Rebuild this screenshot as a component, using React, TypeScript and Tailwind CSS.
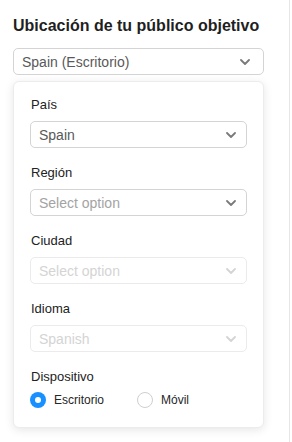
import React from "react";

type Field = {
  label: string;
  value: string;
  placeholder?: boolean;
  disabled?: boolean;
};

const FIELDS: Field[] = [
  { label: "País", value: "Spain" },
  { label: "Región", value: "Select option", placeholder: true },
  { label: "Ciudad", value: "Select option", disabled: true },
  { label: "Idioma", value: "Spanish", disabled: true },
];

function Chevron({ muted }: { muted?: boolean }) {
  return (
    <svg width="10" height="6" viewBox="0 0 10 6" fill="none" className="shrink-0">
      <path
        d="M1 1l4 4 4-4"
        stroke={muted ? "#d4d4d4" : "#7a7a7a"}
        strokeWidth="1.8"
        strokeLinecap="round"
        strokeLinejoin="round"
      />
    </svg>
  );
}

function SelectBox({ field }: { field: Field }) {
  const textColor = field.disabled
    ? "text-[#d4d4d4]"
    : field.placeholder
      ? "text-[#a3a3a3]"
      : "text-[#595959]";
  return (
    <div
      className={`flex h-[27px] items-center justify-between rounded-[5px] border bg-white pl-[8px] pr-[10px] ${
        field.disabled ? "border-[#ebebeb]" : "border-[#d4d4d4]"
      }`}
    >
      <span className={`text-[14px] leading-[20px] ${textColor}`}>{field.value}</span>
      <Chevron muted={field.disabled} />
    </div>
  );
}

function Radio({ label, checked }: { label: string; checked?: boolean }) {
  return (
    <label className="flex items-center gap-[8px]">
      {checked ? (
        <span className="flex h-[16px] w-[16px] items-center justify-center rounded-full bg-[#1890ff]">
          <span className="h-[6px] w-[6px] rounded-full bg-white" />
        </span>
      ) : (
        <span className="h-[16px] w-[16px] rounded-full border border-[#cfcfcf] bg-white" />
      )}
      <span className="text-[12px] leading-[20px] text-[#262626]">{label}</span>
    </label>
  );
}

export default function App() {
  return (
    <div
      className="h-[442px] w-[292px] bg-white"
      style={{ fontFamily: '"Liberation Sans", Arial, sans-serif' }}
    >
      <div className="h-full w-[290px] border-r border-[#e6e6e6] pl-[13px] pr-[25px] pt-[15px]">
        <h2 className="text-[16px] font-bold leading-[22px] text-[#1f1f1f]">
          Ubicación de tu público objetivo
        </h2>

        <div className="mt-[11px] flex h-[27px] items-center justify-between rounded-[5px] border border-[#d4d4d4] pl-[8px] pr-[13px]">
          <span className="text-[14px] leading-[20px] text-[#595959]">Spain (Escritorio)</span>
          <Chevron />
        </div>

        <div className="mt-[6px] h-[347px] rounded-[6px] border border-[#ececec] bg-white px-[16px] pt-[13px] shadow-[0_2px_10px_rgba(0,0,0,0.10)]">
          <div className="flex flex-col gap-[15px]">
            {FIELDS.map((f) => (
              <div key={f.label} className="flex flex-col gap-[6px]">
                <span className="pl-[1px] text-[13px] leading-[20px] text-[#222222]">{f.label}</span>
                <SelectBox field={f} />
              </div>
            ))}
            <div className="flex flex-col gap-[3px]">
              <span className="pl-[1px] text-[13px] leading-[20px] text-[#222222]">Dispositivo</span>
              <div className="flex items-center gap-[33px]">
                <Radio label="Escritorio" checked />
                <Radio label="Móvil" />
              </div>
            </div>
          </div>
        </div>
      </div>
    </div>
  );
}
